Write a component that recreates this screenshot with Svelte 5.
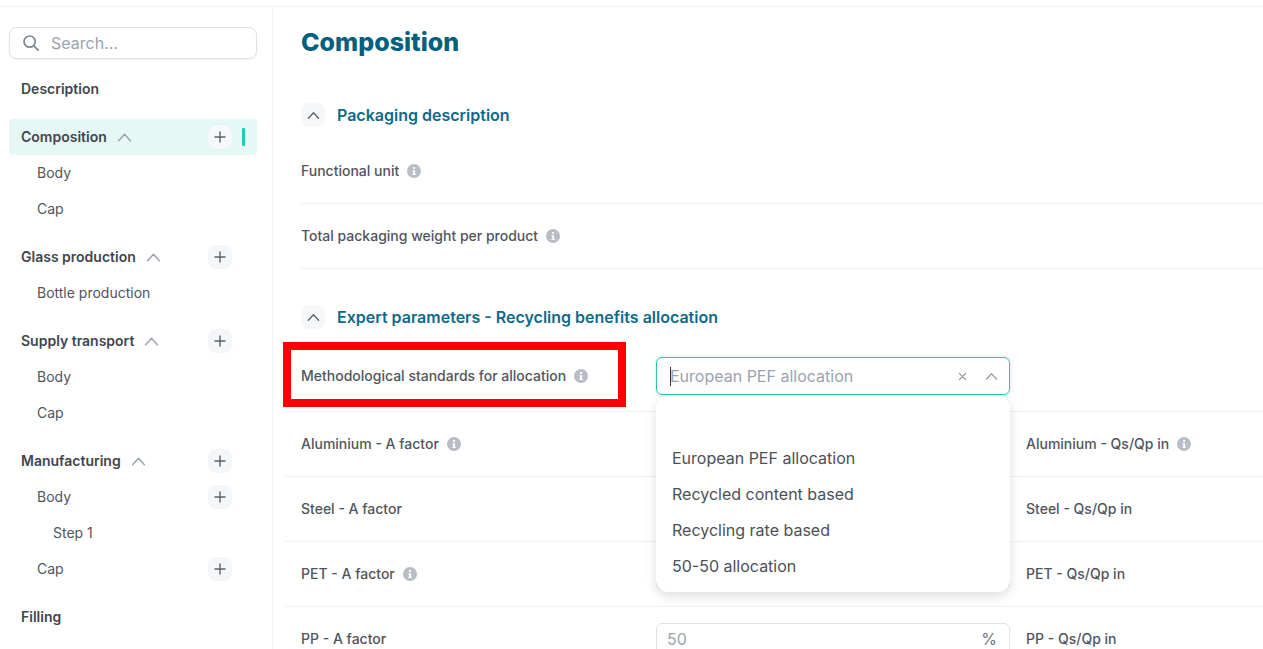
<script>
  const nav = [
    { title: "Description", items: [] },
    { title: "Composition", open: true, add: true, active: true, items: [{ label: "Body" }, { label: "Cap" }] },
    { title: "Glass production", open: true, add: true, items: [{ label: "Bottle production" }] },
    { title: "Supply transport", open: true, add: true, items: [{ label: "Body" }, { label: "Cap" }] },
    {
      title: "Manufacturing",
      open: true,
      add: true,
      items: [{ label: "Body", add: true }, { label: "Step 1", deep: true }, { label: "Cap", add: true }],
    },
    { title: "Filling", items: [] },
  ];

  const factors = [
    { left: "Aluminium - A factor", leftInfo: true, right: "Aluminium - Qs/Qp in", rightInfo: true },
    { left: "Steel - A factor", right: "Steel - Qs/Qp in" },
    { left: "PET - A factor", leftInfo: true, right: "PET - Qs/Qp in" },
    { left: "PP - A factor", right: "PP - Qs/Qp in" },
  ];

  const options = ["", "European PEF allocation", "Recycled content based", "Recycling rate based", "50-50 allocation"];
</script>

{#snippet chevron(cls)}
  <svg class={cls} viewBox="0 0 14 14" fill="none" stroke="currentColor" stroke-width="1.4" stroke-linecap="round" stroke-linejoin="round">
    <path d="M1.5 10 7 4l5.5 6" />
  </svg>
{/snippet}

{#snippet info()}
  <svg class="info" viewBox="0 0 14 14">
    <circle cx="7" cy="7" r="7" fill="#b8bdc6" />
    <rect x="6" y="2.9" width="2.1" height="2" rx="0.6" fill="#fff" />
    <path d="M5.5 6.2h2.6v3.6h.7v1.2H5.4V9.8h.8V7.4h-.7z" fill="#fff" />
  </svg>
{/snippet}

{#snippet plus()}
  <button class="plus" aria-label="Add">
    <svg viewBox="0 0 12 12" fill="none" stroke="currentColor" stroke-width="1.4" stroke-linecap="round">
      <path d="M6 1v10M1 6h10" />
    </svg>
  </button>
{/snippet}

{#snippet label(text, hasInfo, tall = false)}
  <span class="label" class:tall>
    <span class="label-text">{text}</span>
    {#if hasInfo}{@render info()}{/if}
  </span>
{/snippet}

<div class="page">
  <div class="topbar"></div>
  <div class="layout">
    <aside class="sidebar">
      <label class="search">
        <svg viewBox="0 0 16 16" fill="none" stroke="#7d8791" stroke-width="1.7" stroke-linecap="round">
          <circle cx="6.6" cy="6.6" r="5.6" />
          <path d="m10.8 10.8 4.4 4.4" />
        </svg>
        <input type="text" placeholder="Search..." />
      </label>

      {#each nav as group}
        <div class="group">
          <div class="nav-head" class:active={group.active}>
            <span class="nav-title">{group.title}</span>
            {#if group.open}
              {@render chevron("nav-chevron")}
            {/if}
            {#if group.add}
              <span class="nav-add">{@render plus()}</span>
            {/if}
            {#if group.active}
              <span class="marker"></span>
            {/if}
          </div>
          {#each group.items as item}
            <div class="nav-item" class:deep={item.deep}>
              <span class="nav-label">{item.label}</span>
              {#if item.add}
                <span class="nav-add">{@render plus()}</span>
              {/if}
            </div>
          {/each}
        </div>
      {/each}
    </aside>

    <main class="main">
      <h1>Composition</h1>

      <section class="first">
        <div class="section-head">
          <button class="toggle" aria-label="Collapse">{@render chevron("toggle-icon")}</button>
          <h2>Packaging description</h2>
        </div>
        <div class="row plain">{@render label("Functional unit", true)}</div>
        <div class="row plain">{@render label("Total packaging weight per product", true)}</div>
      </section>

      <section class="expert">
        <div class="section-head">
          <button class="toggle" aria-label="Collapse">{@render chevron("toggle-icon")}</button>
          <h2>Expert parameters - Recycling benefits allocation</h2>
        </div>

        <div class="row grid select-row">
          {@render label("Methodological standards for allocation", true, true)}
          <div class="select">
            <span class="caret"></span>
            <span class="select-text">European PEF allocation</span>
            <svg class="clear" viewBox="0 0 10 10" fill="none" stroke="currentColor" stroke-width="1.3" stroke-linecap="round">
              <path d="m1.5 1.5 7 7M8.5 1.5l-7 7" />
            </svg>
            {@render chevron("select-chevron")}
            <ul class="menu">
              {#each options as opt}
                <li>{opt}</li>
              {/each}
            </ul>
          </div>
          <span></span>
          <span class="highlight"></span>
        </div>

        {#each factors as f}
          <div class="row grid">
            {@render label(f.left, f.leftInfo)}
            <div class="number">
              <input type="text" placeholder="50" />
              <span>%</span>
            </div>
            {@render label(f.right, f.rightInfo)}
          </div>
        {/each}
      </section>
    </main>
  </div>
</div>

<style>
  :global(html), :global(body) {
    margin: 0;
    height: 100%;
    overflow: hidden;
    background: #fff;
  }
  .page {
    height: 649px;
    overflow: hidden;
    font-family: Inter, "Liberation Sans", sans-serif;
    font-size: 14px;
    color: #50555d;
  }
  .topbar {
    height: 6px;
    border-bottom: 1px solid #f0f1f3;
  }
  .layout {
    display: flex;
    height: 642px;
  }

  .sidebar {
    width: 273px;
    flex: none;
    box-sizing: border-box;
    padding: 20px 15px 0 9px;
    border-right: 1px solid #f0f1f3;
  }
  .search {
    display: flex;
    align-items: center;
    gap: 12px;
    height: 32px;
    box-sizing: border-box;
    padding: 0 13px;
    border: 1px solid #dfe1e5;
    border-radius: 8px;
    box-shadow: 0 1px 2px rgba(0, 0, 0, 0.06);
    margin-bottom: 12px;
  }
  .search svg {
    width: 16px;
    height: 16px;
    flex: none;
  }
  .search input {
    border: 0;
    outline: 0;
    padding: 0;
    width: 100%;
    font: inherit;
    font-size: 16px;
    color: #4b5058;
  }
  input::placeholder {
    color: #9ca3af;
    opacity: 1;
  }
  .group {
    margin-bottom: 12px;
  }
  .nav-head,
  .nav-item {
    display: flex;
    align-items: center;
    height: 36px;
    padding-left: 12px;
    position: relative;
  }
  .nav-head.active {
    background: #e6f8f6;
    border-radius: 4px;
  }
  .nav-title {
    font-weight: 600;
    color: #41464e;
    margin-top: -2px;
  }
  .nav-label {
    margin-top: -2px;
  }
  :global(.nav-chevron) {
    width: 15px;
    height: 15px;
    margin-left: 10px;
    color: #9ca3af;
  }
  .nav-item {
    padding-left: 28px;
  }
  .nav-item.deep {
    padding-left: 44px;
  }
  .nav-add {
    position: absolute;
    left: 199px;
    top: 6px;
    display: flex;
  }
  .plus {
    width: 24px;
    height: 24px;
    padding: 0;
    border: 0;
    border-radius: 8px;
    background: #f5f6f8;
    color: #5b6169;
    display: flex;
    align-items: center;
    justify-content: center;
  }
  .active .plus {
    background: #f7f8f9;
    box-shadow: 0 0 2px rgba(0, 0, 0, 0.06);
  }
  .plus svg {
    width: 12px;
    height: 12px;
  }
  .marker {
    position: absolute;
    left: 233px;
    top: 9px;
    width: 3px;
    height: 18px;
    border-radius: 1px;
    background: #26c9b2;
  }

  .main {
    flex: 1;
    min-width: 0;
    padding-left: 12px;
  }
  h1 {
    margin: 0;
    padding-left: 16px;
    height: 96px;
    line-height: 70px;
    font-size: 25px;
    font-weight: 800;
    color: #00607f;
  }
  .section-head {
    display: flex;
    align-items: center;
    gap: 12px;
    margin-bottom: 12px;
    padding-left: 16px;
  }
  h2 {
    margin: 0;
    font-size: 16px;
    font-weight: 600;
    color: #0f6a87;
  }
  .toggle {
    width: 24px;
    height: 24px;
    padding: 0;
    border: 0;
    border-radius: 8px;
    background: #f6f7f9;
    color: #5b6169;
    display: flex;
    align-items: center;
    justify-content: center;
  }
  :global(.toggle-icon) {
    width: 13px;
    height: 13px;
  }
  .first {
    margin-bottom: 36px;
  }
  .row {
    box-sizing: border-box;
    height: 65px;
    padding: 16px 0 16px 16px;
    border-bottom: 1px solid #f0f1f3;
  }
  .row.plain {
    margin-left: 16px;
    padding-left: 0;
  }
  .row.grid {
    display: grid;
    grid-template-columns: 339px 354px 1fr;
    column-gap: 16px;
    align-items: start;
    position: relative;
  }
  .select-row.row {
    height: 71px;
  }
  .label {
    display: inline-flex;
    align-items: center;
    gap: 8px;
    height: 32px;
    font-weight: 500;
    white-space: nowrap;
  }
  .label.tall {
    height: 38px;
  }
  .label-text {
    margin-top: -2px;
  }
  :global(.info) {
    width: 14px;
    height: 14px;
    flex: none;
  }

  .select {
    position: relative;
    display: flex;
    align-items: center;
    height: 38px;
    box-sizing: border-box;
    padding: 0 11px 0 13px;
    border: 1px solid #2cc5b0;
    border-radius: 6px;
    box-shadow: 0 0 0 2px rgba(44, 197, 176, 0.1);
    font-size: 16px;
    color: #9ca3af;
  }
  .caret {
    width: 1px;
    height: 19px;
    background: #333;
    margin-right: -1px;
  }
  .select-text {
    flex: 1;
  }
  .clear {
    width: 9px;
    height: 9px;
    color: #8f959e;
    margin-right: 18px;
  }
  :global(.select-chevron) {
    width: 13px;
    height: 13px;
    color: #9aa0a8;
  }
  .menu {
    position: absolute;
    z-index: 2;
    top: 38px;
    left: -1px;
    right: -1px;
    margin: 0;
    padding: 8px 0;
    list-style: none;
    background: #fff;
    border-radius: 12px;
    box-shadow: 0 4px 12px rgba(0, 0, 0, 0.13);
    color: #4b5058;
  }
  .menu li {
    height: 36px;
    line-height: 36px;
    padding-left: 16px;
  }
  .highlight {
    position: absolute;
    left: -2px;
    top: 1px;
    width: 327px;
    height: 49px;
    border: 8px solid #ff0000;
    pointer-events: none;
  }

  .number {
    display: flex;
    align-items: center;
    height: 32px;
    box-sizing: border-box;
    padding: 0 12px 0 10px;
    border: 1px solid #dfe1e5;
    border-radius: 6px;
    font-size: 16px;
    color: #6b7280;
  }
  .number input {
    flex: 1;
    min-width: 0;
    border: 0;
    outline: 0;
    padding: 0;
    font: inherit;
  }
</style>
